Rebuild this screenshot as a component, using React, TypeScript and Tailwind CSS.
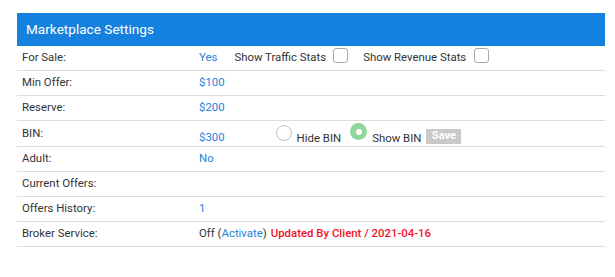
import React from "react";

const blue = "text-[#1f7fd8]";

function Row({label, children, className = ""}: {label: string; children?: React.ReactNode; className?: string}) {
    return (
        <div className={`flex items-center h-[25px] border-b border-[#dcdcdc] ${className}`}>
            <div className="w-[182px] pl-[5px] text-[#333]">{label}</div>
            <div className="flex items-center">{children}</div>
        </div>
    );
}

function Checkbox() {
    return <span className="inline-block w-[15px] h-[15px] rounded-[3px] border border-[#a9a9a9] bg-white"></span>;
}

export default function App() {
    return (
        <div className="w-[615px] h-[277px] bg-white" style={{fontFamily: "Roboto, 'Liberation Sans', sans-serif"}}>
            <div className="ml-[17px] pt-[13px] w-[588px] text-[11.4px]">
                {/* Header */}
                <div className="h-[33px] bg-[#1581de] flex items-center pl-[9px] text-white text-[13.6px]">
                    Marketplace Settings
                </div>

                <Row label="For Sale:">
                    <span className={blue}>Yes</span>
                    <span className="ml-[17px] text-[#333]">Show Traffic Stats</span>
                    <span className="ml-[7px]"><Checkbox/></span>
                    <span className="ml-[15px] text-[#333]">Show Revenue Stats</span>
                    <span className="ml-[8px]"><Checkbox/></span>
                </Row>
                <Row label="Min Offer:"><span className={blue}>$100</span></Row>
                <Row label="Reserve:"><span className={blue}>$200</span></Row>

                {/* BIN row */}
                <div className="flex h-[26px] border-b border-[#dcdcdc]">
                    <div className="w-[182px] pl-[5px] text-[#333] pt-[4px]">BIN:</div>
                    <div className="flex items-start">
                        <span className={`${blue} pt-[8px]`}>$300</span>
                        <span className="ml-[51px] mt-[4px] w-[16px] h-[16px] rounded-full border border-[#c4c4c4] bg-white"></span>
                        <span className="ml-[5px] pt-[9px] text-[#333]">Hide BIN</span>
                        <span className="ml-[9px] mt-[2px] w-[17px] h-[17px] rounded-full bg-[#8fd69c] flex items-center justify-center">
                            <span className="w-[6px] h-[6px] rounded-full bg-white"></span>
                        </span>
                        <span className="ml-[5px] pt-[9px] text-[#333]">Show BIN</span>
                        <span className="ml-[5px] mt-[8px] w-[35px] h-[15px] bg-[#c9c9c9] text-white font-bold text-[11px] flex items-center justify-center">Save</span>
                    </div>
                </div>

                <Row label="Adult:"><span className={blue}>No</span></Row>
                <Row label="Current Offers:"></Row>
                <Row label="Offers History:"><span className={blue}>1</span></Row>
                <Row label="Broker Service:">
                    <span className="text-[#333]">Off (<span className={blue}>Activate</span>)</span>
                    <span className="ml-[4px] text-[#f5101f] font-medium">Updated By Client / 2021-04-16</span>
                </Row>
            </div>
        </div>
    );
}
